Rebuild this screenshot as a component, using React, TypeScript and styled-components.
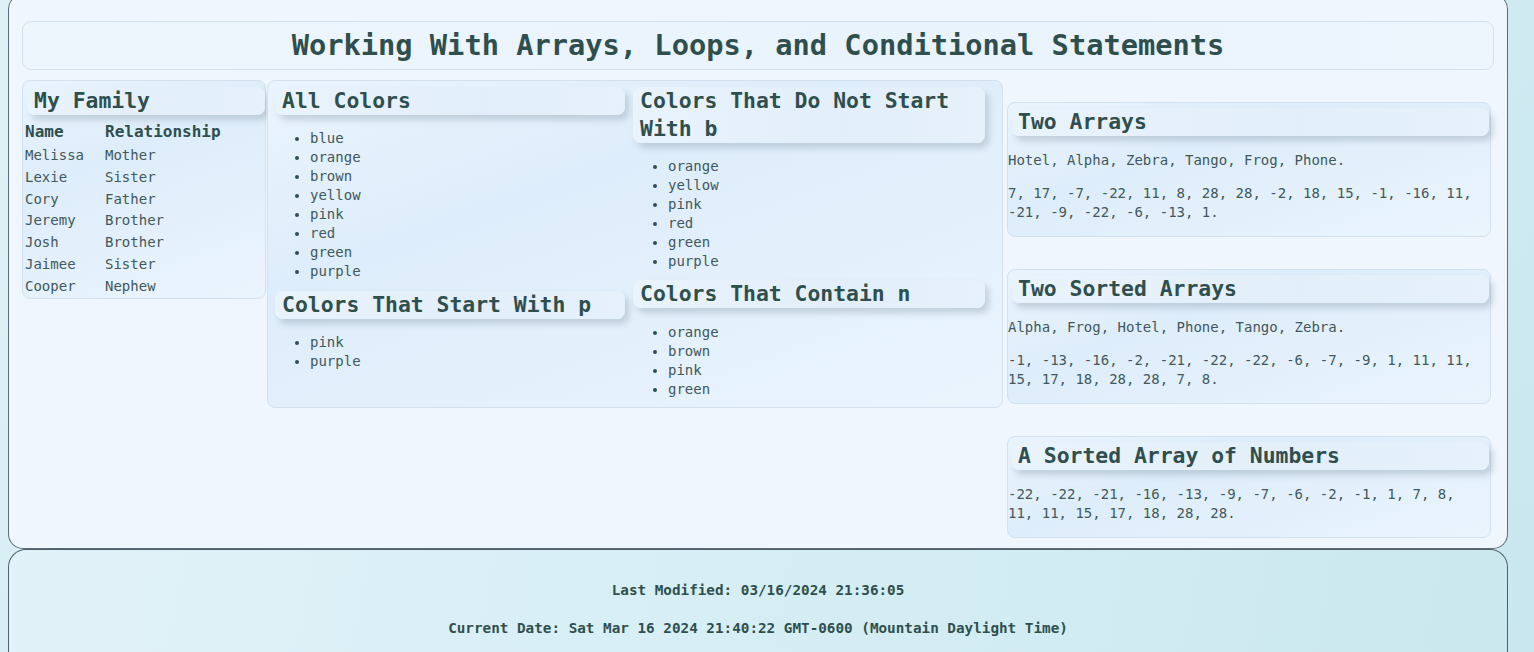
import React from "react";
import styled, { createGlobalStyle } from "styled-components";

const GlobalStyle = createGlobalStyle`
  html, body {
    margin: 0;
    padding: 0;
  }
  body {
    padding: 0 8px;
    min-height: 652px;
    overflow: hidden;
    background: linear-gradient(135deg, #dff1f7 0%, #d3ecf3 50%, #c9e7ef 100%);
    font-family: "DejaVu Sans Mono", "Liberation Mono", monospace;
    color: #2f4f4f;
  }
`;

const Main = styled.main`
  box-sizing: border-box;
  width: 1500px;
  margin-top: -6px;
  padding: 26px 13px 10px 13px;
  border: 1px solid #5b6b78;
  border-top-color: #8796a3;
  border-radius: 15px;
  background: #eff6fd;
`;

const Header = styled.header`
  box-sizing: border-box;
  height: 49px;
  display: flex;
  align-items: center;
  justify-content: center;
  padding-bottom: 1px;
  border: 1px solid #d3e1ee;
  border-radius: 9px;
  background: linear-gradient(90deg, #eef6fd 0%, #e9f3fc 60%, #edf5fd 100%);
`;

const Title = styled.h1`
  margin: 0;
  font-size: 28.7px;
  line-height: 34px;
  font-weight: 700;
  color: #2f4f4f;
`;

const Row = styled.div`
  display: flex;
  align-items: flex-start;
  margin-top: 10px;
`;

const Card = styled.section<{ $w: number; $pad: string; $ml?: number }>`
  box-sizing: border-box;
  width: ${(p) => p.$w}px;
  margin-left: ${(p) => p.$ml ?? 0}px;
  padding: ${(p) => p.$pad};
  border: 1px solid #d3e1ee;
  border-radius: 8px;
  background: linear-gradient(160deg, #eaf4fd 0%, #deedfb 35%, #eaf4fd 100%);
`;

const SectionTitle = styled.h2<{ $m: string }>`
  margin: ${(p) => p.$m};
  padding: 0 7px;
  font-size: 21.4px;
  line-height: 28px;
  font-weight: 700;
  color: #2f4f4f;
  border-radius: 8px;
  background: linear-gradient(90deg, #e9f3fc 0%, #e2eef9 60%, #e6f1fb 100%);
  box-shadow: 4px 5px 6px rgba(70, 90, 110, 0.22);
`;

const FamilyTable = styled.div`
  display: grid;
  grid-template-columns: 80px 1fr;
  padding-left: 2px;
`;

const HeadCell = styled.div`
  font-size: 16px;
  font-weight: 700;
  line-height: 21px;
  padding-bottom: 3px;
`;

const Cell = styled.div`
  font-size: 14px;
  line-height: 21.8px;
  color: #41585c;
`;

const ColorsGrid = styled.div`
  display: grid;
  grid-template-columns: 350px 352px;
  column-gap: 8px;
  align-items: start;
`;

const Column = styled.div`
  display: flex;
  flex-direction: column;
`;

const List = styled.ul<{ $mb: number }>`
  margin: 0 0 ${(p) => p.$mb}px 0;
  padding-left: 35px;
  font-size: 14px;
  line-height: 19px;
  color: #41585c;
  li::marker {
    color: #2f4f4f;
  }
`;

const RightCol = styled.div`
  display: flex;
  flex-direction: column;
  gap: 32px;
  padding-top: 22px;
`;

const Para = styled.p`
  margin: 14px 9px 14px 0;
  font-size: 14px;
  line-height: 19px;
  color: #41585c;
`;

const Footer = styled.footer`
  box-sizing: border-box;
  width: 1500px;
  margin-top: 0;
  padding: 11px 0 20px;
  min-height: 120px;
  border: 1px solid #4f5f6c;
  border-bottom: none;
  border-radius: 18px 18px 0 0;
  background: linear-gradient(100deg, #e1f2f8 0%, #d5eef4 50%, #cbe8ef 100%);
  text-align: center;
`;

const FootLine = styled.p`
  margin: 20px 0;
  font-size: 14.3px;
  line-height: 18px;
  font-weight: 700;
  color: #2f4f4f;
`;

const family: [string, string][] = [
  ["Melissa", "Mother"],
  ["Lexie", "Sister"],
  ["Cory", "Father"],
  ["Jeremy", "Brother"],
  ["Josh", "Brother"],
  ["Jaimee", "Sister"],
  ["Cooper", "Nephew"],
];

const colors = ["blue", "orange", "brown", "yellow", "pink", "red", "green", "purple"];

const RIGHT_TITLE = "0 1px 15px 3px";

export default function App() {
  const notB = colors.filter((c) => !c.startsWith("b"));
  const startP = colors.filter((c) => c.startsWith("p"));
  const hasN = colors.filter((c) => c.includes("n"));

  return (
    <>
      <GlobalStyle />
      <Main>
        <Header>
          <Title>Working With Arrays, Loops, and Conditional Statements</Title>
        </Header>
        <Row>
          <Card $w={244} $pad="6px 0 0 0">
            <SectionTitle $m="0 0 6px 4px">My Family</SectionTitle>
            <FamilyTable>
              <HeadCell>Name</HeadCell>
              <HeadCell>Relationship</HeadCell>
              {family.map(([n, r]) => (
                <React.Fragment key={n}>
                  <Cell>{n}</Cell>
                  <Cell>{r}</Cell>
                </React.Fragment>
              ))}
            </FamilyTable>
          </Card>
          <Card $w={736} $ml={1} $pad="6px 10px 0 7px">
            <ColorsGrid>
              <Column>
                <SectionTitle $m="0 0 14px 0">All Colors</SectionTitle>
                <List $mb={10}>
                  {colors.map((c) => (
                    <li key={c}>{c}</li>
                  ))}
                </List>
                <SectionTitle $m="0 0 14px 0">Colors That Start With p</SectionTitle>
                <List $mb={9}>
                  {startP.map((c) => (
                    <li key={c}>{c}</li>
                  ))}
                </List>
              </Column>
              <Column>
                <SectionTitle $m="0 0 14px 0">Colors That Do Not Start With b</SectionTitle>
                <List $mb={9}>
                  {notB.map((c) => (
                    <li key={c}>{c}</li>
                  ))}
                </List>
                <SectionTitle $m="0 0 15px 0">Colors That Contain n</SectionTitle>
                <List $mb={8}>
                  {hasN.map((c) => (
                    <li key={c}>{c}</li>
                  ))}
                </List>
              </Column>
            </ColorsGrid>
          </Card>
          <RightCol>
            <Card $w={484} $ml={4} $pad="5px 0 0 0">
              <SectionTitle $m={RIGHT_TITLE}>Two Arrays</SectionTitle>
              <Para>Hotel, Alpha, Zebra, Tango, Frog, Phone.</Para>
              <Para>
                7, 17, -7, -22, 11, 8, 28, 28, -2, 18, 15, -1, -16, 11, -21, -9, -22, -6, -13, 1.
              </Para>
            </Card>
            <Card $w={484} $ml={4} $pad="5px 0 0 0">
              <SectionTitle $m={RIGHT_TITLE}>Two Sorted Arrays</SectionTitle>
              <Para>Alpha, Frog, Hotel, Phone, Tango, Zebra.</Para>
              <Para>
                -1, -13, -16, -2, -21, -22, -22, -6, -7, -9, 1, 11, 11, 15, 17, 18, 28, 28, 7, 8.
              </Para>
            </Card>
            <Card $w={484} $ml={4} $pad="5px 0 0 0">
              <SectionTitle $m={RIGHT_TITLE}>A Sorted Array of Numbers</SectionTitle>
              <Para>
                -22, -22, -21, -16, -13, -9, -7, -6, -2, -1, 1, 7, 8, 11, 11, 15, 17, 18, 28, 28.
              </Para>
            </Card>
          </RightCol>
        </Row>
      </Main>
      <Footer>
        <FootLine>Last Modified: 03/16/2024 21:36:05</FootLine>
        <FootLine>Current Date: Sat Mar 16 2024 21:40:22 GMT-0600 (Mountain Daylight Time)</FootLine>
      </Footer>
    </>
  );
}
